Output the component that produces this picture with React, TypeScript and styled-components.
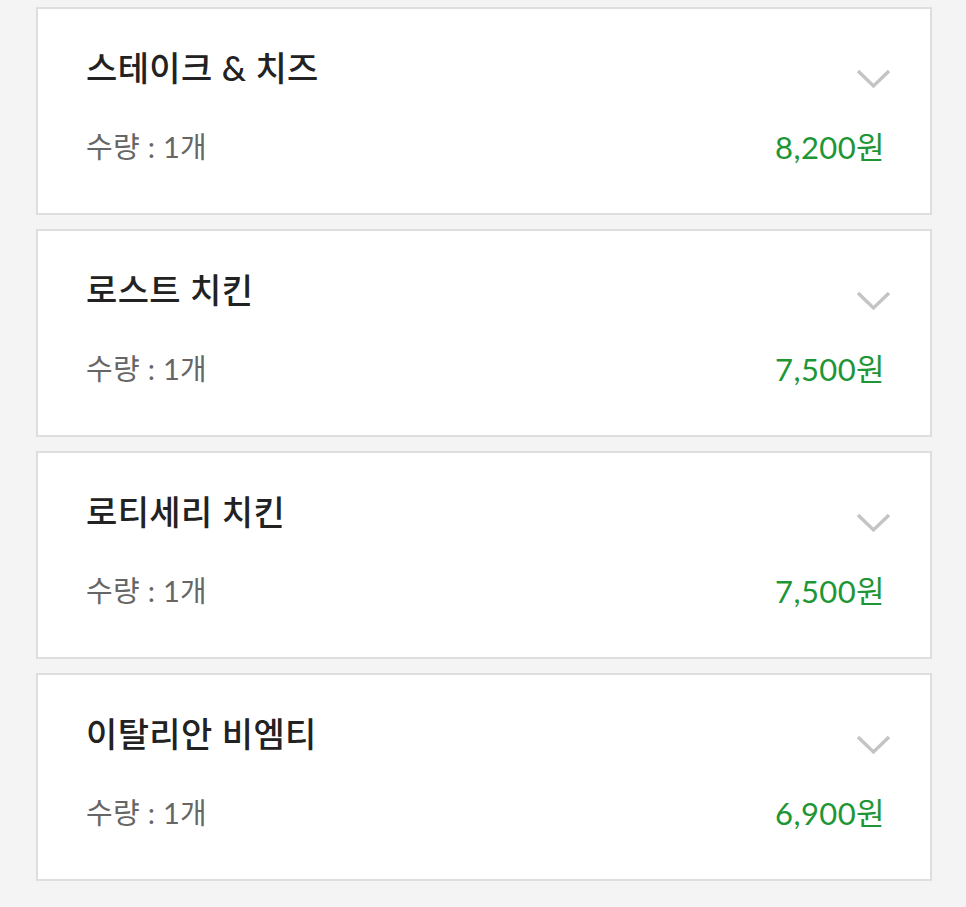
import React from "react";
import styled, { createGlobalStyle } from "styled-components";

const GlobalStyle = createGlobalStyle`
  html, body {
    margin: 0;
    padding: 0;
    background: #f4f4f4;
  }
  body {
    font-family: Lato, "Noto Sans CJK KR", sans-serif;
  }
`;

type Item = { name: string; qty: number; price: string };

const items: Item[] = [
  { name: "스테이크 & 치즈", qty: 1, price: "8,200원" },
  { name: "로스트 치킨", qty: 1, price: "7,500원" },
  { name: "로티세리 치킨", qty: 1, price: "7,500원" },
  { name: "이탈리안 비엠티", qty: 1, price: "6,900원" },
];

const Page = styled.div`
  display: flex;
  flex-direction: column;
  gap: 14px;
  padding: 7px 34px 24px 36px;
  min-height: 907px;
  box-sizing: border-box;
`;

const Card = styled.div`
  background: #ffffff;
  border: 2px solid #dedede;
  height: 208px;
  box-sizing: border-box;
  padding: 38px 39px 0 48px;
  display: grid;
  grid-template-columns: 1fr auto;
  grid-template-rows: 42px 36px;
  align-content: start;
  row-gap: 40px;
`;

const Title = styled.div`
  font-size: 34px;
  line-height: 42px;
  font-weight: 500;
  color: #222222;
  letter-spacing: 0.4px;
`;

const Toggle = styled.div`
  justify-self: end;
  align-self: start;
  margin-top: 22px;
  width: 35px;
  height: 20px;
  display: flex;
`;

const Qty = styled.div`
  font-size: 29px;
  line-height: 36px;
  color: #666666;
  letter-spacing: 0.3px;
`;

const Price = styled.div`
  font-size: 31px;
  line-height: 36px;
  color: #1e9636;
  margin-right: 6px;
  text-align: right;
  letter-spacing: 0.4px;
`;

const Chevron = () => (
  <svg width="35" height="20" viewBox="0 0 35 20" fill="none">
    <path d="M2 2 L17.5 17 L33 2" stroke="#c4c4c4" strokeWidth="3.4" />
  </svg>
);

export default function App() {
  return (
    <>
      <GlobalStyle />
      <Page>
        {items.map((it) => (
          <Card key={it.name}>
            <Title>{it.name}</Title>
            <Toggle>
              <Chevron />
            </Toggle>
            <Qty>수량 : {it.qty}개</Qty>
            <Price>{it.price}</Price>
          </Card>
        ))}
      </Page>
    </>
  );
}
